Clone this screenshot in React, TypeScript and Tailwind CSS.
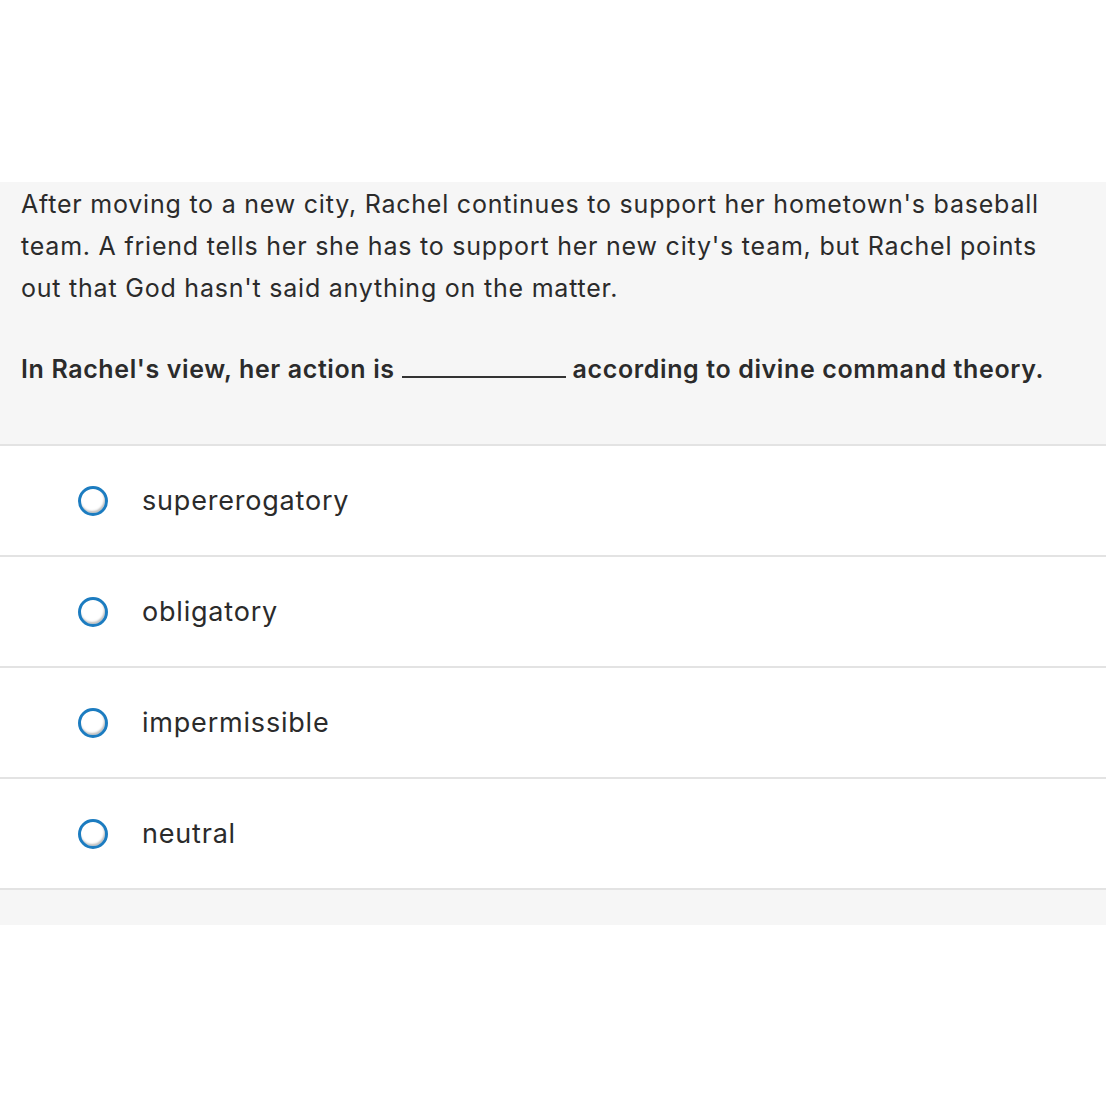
const options = ["supererogatory", "obligatory", "impermissible", "neutral"];

function Radio() {
  return (
    <span className="relative flex h-[30px] w-[30px] shrink-0 items-center justify-center">
      <span className="absolute inset-0 rounded-full border-[3px] border-[#1c7cc0] shadow-[-1px_-2px_2px_rgba(0,0,0,0.25)_inset]" />
    </span>
  );
}

export default function App() {
  return (
    <div className="min-h-[1108px] w-[1108px] bg-white pt-[182px] font-['Inter','Open_Sans',sans-serif] text-[#2b2b2b]">
      <div className="w-[1106px] bg-[#f6f6f6]">
        <section className="border-b-2 border-[#e3e3e3] px-[21px] pb-[54px] pt-px text-[25px] leading-[42px]">
          <p className="whitespace-nowrap tracking-[0.78px]">
            After moving to a new city, Rachel continues to support her hometown's baseball
            <br />
            team. A friend tells her she has to support her new city's team, but Rachel points
            <br />
            out that God hasn't said anything on the matter.
          </p>
          <p className="mt-[39px] whitespace-nowrap font-semibold tracking-[0.62px]">
            In Rachel's view, her action is{" "}
            <span className="inline-block w-[164px] border-b-2 border-[#333]" />{" "}
            according to divine command theory.
          </p>
        </section>
        <ul className="bg-white">
          {options.map((o) => (
            <li key={o} className="flex h-[111px] items-center gap-[34px] border-b-2 border-[#e3e3e3] pl-[78px]">
              <Radio />
              <span className="text-[27px] leading-[42px] tracking-[0.8px]">{o}</span>
            </li>
          ))}
        </ul>
        <div className="h-[35px]" />
      </div>
    </div>
  );
}
